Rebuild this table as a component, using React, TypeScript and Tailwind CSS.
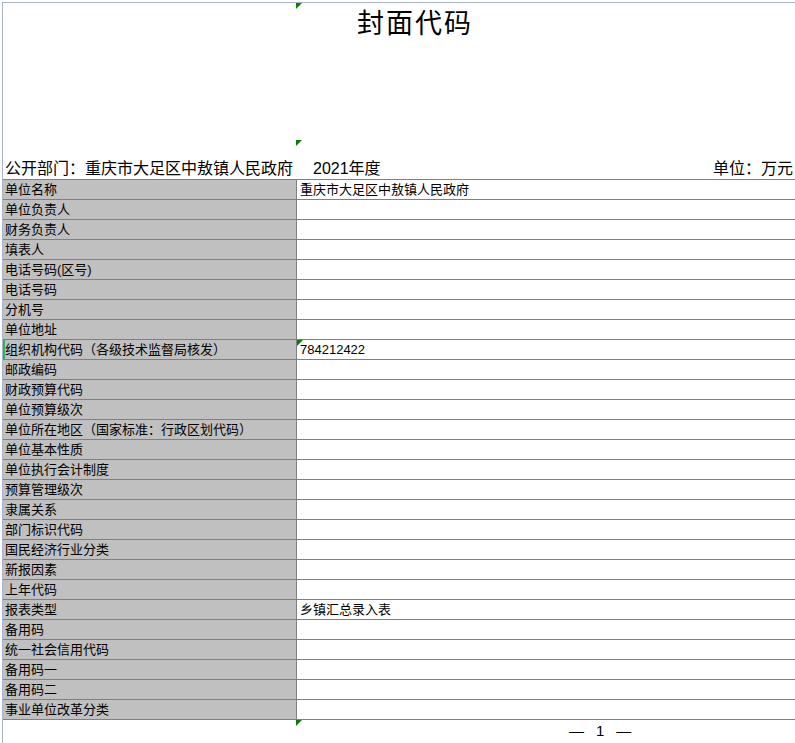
const rows: { label: string; value?: string; marked?: boolean }[] = [
  { label: "单位名称", value: "重庆市大足区中敖镇人民政府" },
  { label: "单位负责人" },
  { label: "财务负责人" },
  { label: "填表人" },
  { label: "电话号码(区号)" },
  { label: "电话号码" },
  { label: "分机号" },
  { label: "单位地址" },
  { label: "组织机构代码（各级技术监督局核发）", value: "784212422", marked: true },
  { label: "邮政编码" },
  { label: "财政预算代码" },
  { label: "单位预算级次" },
  { label: "单位所在地区（国家标准：行政区划代码）" },
  { label: "单位基本性质" },
  { label: "单位执行会计制度" },
  { label: "预算管理级次" },
  { label: "隶属关系" },
  { label: "部门标识代码" },
  { label: "国民经济行业分类" },
  { label: "新报因素" },
  { label: "上年代码" },
  { label: "报表类型", value: "乡镇汇总录入表" },
  { label: "备用码" },
  { label: "统一社会信用代码" },
  { label: "备用码一" },
  { label: "备用码二" },
  { label: "事业单位改革分类" },
];

const font = { fontFamily: '"Liberation Sans", "Noto Sans CJK SC", sans-serif' };

const Marker = ({ className }: { className: string }) => (
  <svg width="6" height="6" viewBox="0 0 6 6" className={`absolute ${className}`}>
    <polygon points="0,0 6,0 0,6" fill="#0a7a0a" />
  </svg>
);

export default function App() {
  return (
    <div className="relative h-[743px] w-[795px] overflow-hidden bg-white pl-[2px] pt-[2px] text-black" style={font}>
      <div className="flex h-full flex-col border-l border-t border-[#a9b4cc]">
        <div className="h-[156px] pl-[354px] pt-[4px] text-[27px] leading-[34px] tracking-[2px]">封面代码</div>

        <div className="flex h-[20px] items-end pl-[2px] pr-[2px] text-[16px] leading-[20px]">
          <span>公开部门：重庆市大足区中敖镇人民政府</span>
          <span className="ml-[20px]">2021年度</span>
          <span className="ml-auto">单位：万元</span>
        </div>

        <div className="border-t border-[#808080] text-[13px]">
          {rows.map((r) => (
            <div key={r.label} className="flex h-[20px] border-b border-[#808080]">
              <div
                className={
                  r.marked
                    ? "flex w-[294px] items-center border-l-2 border-r border-[#808080] border-l-[#2db36b] bg-[#c0c0c0]"
                    : "flex w-[294px] items-center border-r border-[#808080] bg-[#c0c0c0] pl-[2px]"
                }
              >
                {r.label}
              </div>
              <div className="flex flex-1 items-center pl-[3px]">{r.value}</div>
            </div>
          ))}
        </div>

        <div className="flex pl-[566px] pt-[1px] text-[15px] leading-[20px]">
          <span>—</span>
          <span className="mx-[12px]">1</span>
          <span>—</span>
        </div>
      </div>

      <Marker className="left-[296px] top-[3px]" />
      <Marker className="left-[296px] top-[140px]" />
      <Marker className="left-[297px] top-[340px]" />
      <Marker className="left-[296px] top-[720px]" />
    </div>
  );
}
